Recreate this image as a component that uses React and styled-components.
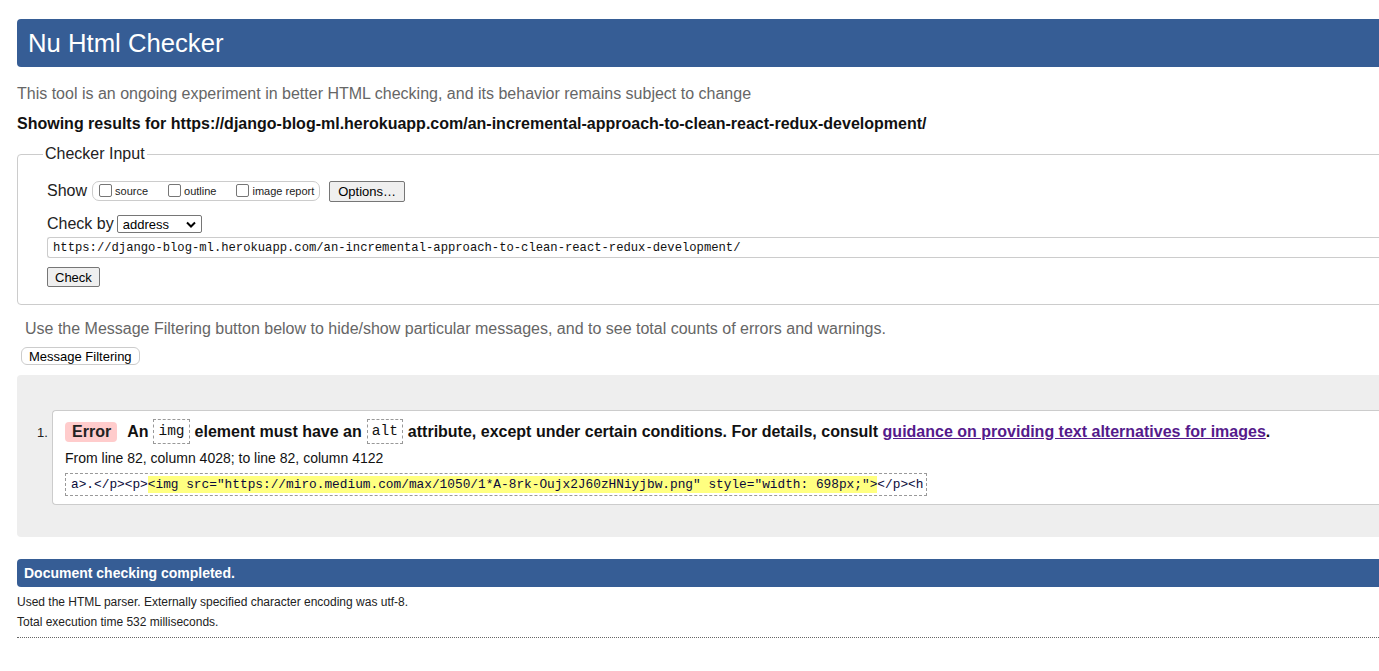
import React from "react";
import styled, { createGlobalStyle } from "styled-components";

const Global = createGlobalStyle`
  html, body { margin: 0; padding: 0; overflow: hidden; background: #fff; }
  body { font-family: "Liberation Sans", Arial, sans-serif; color: #000; }
`;

const BLUE = "#365d95";

const Page = styled.div`
  width: 1440px;
  padding: 19px 0 0 17px;
  font-size: 16px;
`;

const Header = styled.h1`
  margin: 0;
  height: 48px;
  display: flex;
  align-items: center;
  padding-left: 11px;
  background: ${BLUE};
  color: #fff;
  font-weight: normal;
  font-size: 25.7px;
  border-radius: 4px 0 0 4px;
`;

const Intro = styled.p`
  margin: ${(p) => p.$mt || 0}px 0 0;
  line-height: 20px;
  color: ${(p) => p.$color || "#666"};
  font-weight: ${(p) => (p.$bold ? "bold" : "normal")};
  padding-left: ${(p) => p.$indent || 0}px;
`;

const Fieldset = styled.fieldset`
  margin: 10px 0 0;
  padding: 8px 0 17px 29px;
  border: 1px solid #ccc;
  border-radius: 4px;
  min-width: 0;
`;

const Legend = styled.legend`
  margin-left: -4px;
  padding: 0 2px;
  font-size: 16px;
  line-height: 20px;
  color: #222;
`;

const Row = styled.div`
  display: flex;
  align-items: center;
  margin-top: ${(p) => p.$mt || 0}px;
  padding-left: ${(p) => p.$pl || 0}px;
  height: ${(p) => p.$h || 22}px;
`;

const RowLabel = styled.span`
  font-size: 16px;
  color: #222;
  margin-right: ${(p) => p.$mr || 4}px;
`;

const Group = styled.span`
  display: inline-flex;
  align-items: center;
  height: 18px;
  border: 1px solid #ccc;
  border-radius: 7px;
  padding: 0 5px 0 5px;
`;

const CheckLabel = styled.label`
  display: inline-flex;
  align-items: center;
  font-size: 11px;
  color: #222;
  margin-right: ${(p) => p.$mr || 0}px;
`;

const Box = styled.span`
  width: 11px;
  height: 11px;
  border: 1px solid #767676;
  border-radius: 2px;
  background: #fff;
  margin: 0 3px 2px 1px;
`;

const Button = styled.button`
  font-family: "Liberation Sans", Arial, sans-serif;
  font-size: 13px;
  color: #000;
  height: ${(p) => p.$h || 21}px;
  padding: 0 ${(p) => p.$px || 7}px;
  margin-left: ${(p) => p.$ml || 0}px;
  background: ${(p) => (p.$round ? "#fff" : "#efefef")};
  border: 1px solid ${(p) => (p.$round ? "#ccc" : "#767676")};
  border-radius: ${(p) => (p.$round ? 6 : 2)}px;
  line-height: 1;
`;

const Select = styled.div`
  width: 85px;
  height: 18px;
  box-sizing: border-box;
  border: 1px solid #767676;
  border-radius: 2px;
  display: flex;
  align-items: center;
  justify-content: space-between;
  padding: 0 5px 0 5px;
  font-size: 13px;
  color: #000;
`;

const UrlInput = styled.div`
  margin-top: 2px;
  height: 21px;
  box-sizing: border-box;
  border: 1px solid #ccc;
  border-right: none;
  border-radius: 3px 0 0 3px;
  display: flex;
  align-items: center;
  padding-left: 5px;
  font-family: "Liberation Mono", "DejaVu Sans Mono", monospace;
  font-size: 12.2px;
  color: #111;
`;

const Results = styled.div`
  margin-top: 10px;
  background: #eee;
  border-radius: 4px 0 0 4px;
  padding: 35px 0 32px;
`;

const List = styled.ol`
  margin: 0;
  padding: 0 0 0 35px;
  list-style: none;
`;

const Item = styled.li`
  position: relative;
  background: #fff;
  border: 1px solid #ccc;
  border-right: none;
  border-radius: 4px 0 0 4px;
  padding: 7px 0 8px 12px;
`;

const Marker = styled.span`
  position: absolute;
  left: -16px;
  top: 14px;
  font-size: 13px;
  color: #222;
`;

const Message = styled.p`
  margin: 0;
  display: flex;
  align-items: center;
  font-weight: bold;
  font-size: 16px;
  line-height: 27px;
  color: #111;
  white-space: pre;
`;

const Badge = styled.strong`
  background: #fcc;
  border-radius: 4px;
  padding: 0 6px 0 7px;
  line-height: 20px;
  margin-right: 10px;
  color: #222;
`;

const Code = styled.code`
  display: inline-block;
  font-family: "Liberation Mono", "DejaVu Sans Mono", monospace;
  font-weight: normal;
  font-size: 14.5px;
  border: 1px dashed #999;
  padding: 0 4px;
  margin: 0 5px;
  line-height: 23px;
  color: #111;
`;

const Link = styled.a`
  color: #551a8b;
  text-decoration: underline;
`;

const Location = styled.p`
  margin: 4px 0 0;
  font-size: 14px;
  line-height: 18px;
  color: #111;
`;

const Extract = styled.p`
  margin: 6px 0 0;
  display: inline-block;
  border: 1px dashed #999;
  padding: 0 3px 0 5px;
  font-family: "Liberation Mono", "DejaVu Sans Mono", monospace;
  font-size: 12.8px;
  line-height: 21px;
  color: #0a0a3a;
  white-space: pre;
`;

const Mark = styled.mark`
  background: #ffff80;
  color: inherit;
  padding: 1px 0;
`;

const DoneBar = styled.h2`
  margin: 22px 0 0;
  height: 28px;
  display: flex;
  align-items: center;
  padding-left: 7px;
  background: ${BLUE};
  color: #fff;
  font-size: 14px;
  font-weight: bold;
  border-radius: 4px 0 0 4px;
`;

const Details = styled.p`
  margin: ${(p) => p.$mt || 6}px 0 0;
  font-size: 12px;
  line-height: 14px;
  color: #222;
`;

const Rule = styled.hr`
  margin: 8px 0 0;
  border: none;
  border-top: 1px dotted #666;
`;

const Chevron = () => (
  <svg width="10" height="7" viewBox="0 0 10 7">
    <path d="M1 1.5 L5 5.5 L9 1.5" fill="none" stroke="#000" strokeWidth="2" />
  </svg>
);

export default function App() {
  const url =
    "https://django-blog-ml.herokuapp.com/an-incremental-approach-to-clean-react-redux-development/";
  return (
    <Page>
      <Global />
      <Header>Nu Html Checker</Header>
      <Intro $mt={17}>This tool is an ongoing experiment in better HTML checking, and its behavior remains subject to change</Intro>
      <Intro $mt={10} $bold $color="#111">
        Showing results for {url}
      </Intro>
      <Fieldset>
        <Legend>Checker Input</Legend>
        <Row $h={22} $mt={8}>
          <RowLabel $mr={5}>Show</RowLabel>
          <Group>
            <CheckLabel $mr={19}><Box />source</CheckLabel>
            <CheckLabel $mr={19}><Box />outline</CheckLabel>
            <CheckLabel><Box />image report</CheckLabel>
          </Group>
          <Button $ml={9} $px={8}>Options…</Button>
        </Row>
        <Row $h={22} $mt={11}>
          <RowLabel $mr={3}>Check by</RowLabel>
          <Select>
            <span>address</span>
            <Chevron />
          </Select>
        </Row>
        <UrlInput>{url}</UrlInput>
        <Row $h={20} $mt={9}>
          <Button $h={20} $px={7}>Check</Button>
        </Row>
      </Fieldset>
      <Intro $mt={14} $indent={8}>
        Use the Message Filtering button below to hide/show particular messages, and to see total counts of errors and warnings.
      </Intro>
      <Row $h={18} $mt={8} $pl={4}>
        <Button $round $h={18} $px={7}>Message Filtering</Button>
      </Row>
      <Results>
        <List>
          <Item>
            <Marker>1.</Marker>
            <Message>
              <Badge>Error</Badge>An<Code>img</Code>element must have an<Code>alt</Code>attribute, except under certain conditions. For details, consult <Link href="#">guidance on providing text alternatives for images</Link>.
            </Message>
            <Location>From line 82, column 4028; to line 82, column 4122</Location>
            <Extract>
              a&gt;.&lt;/p&gt;&lt;p&gt;<Mark>&lt;img src="https://miro.medium.com/max/1050/1*A-8rk-Oujx2J60zHNiyjbw.png" style="width: 698px;"&gt;</Mark>&lt;/p&gt;&lt;h
            </Extract>
          </Item>
        </List>
      </Results>
      <DoneBar>Document checking completed.</DoneBar>
      <Details $mt={8}>Used the HTML parser. Externally specified character encoding was utf-8.</Details>
      <Details $mt={6}>Total execution time 532 milliseconds.</Details>
      <Rule />
    </Page>
  );
}
